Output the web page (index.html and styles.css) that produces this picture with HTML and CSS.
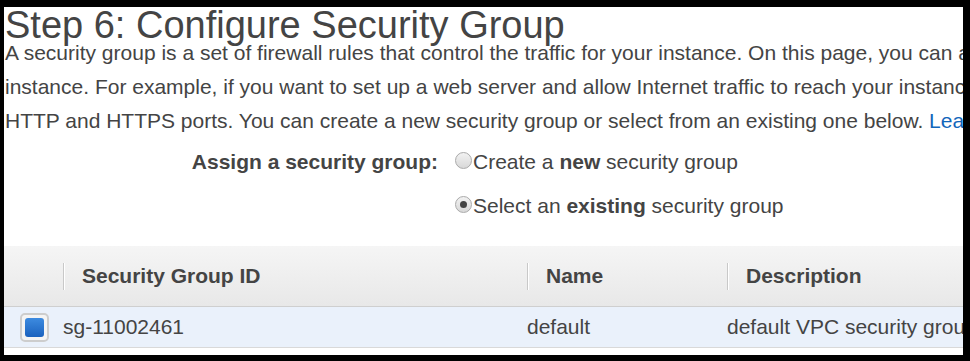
FILE: index.html
```html
<!DOCTYPE html>
<html>
<head>
	<meta charset="UTF-8">
	<title>Step 6: Configure Security Group</title>
	<link rel="stylesheet" href="styles.css">
</head>
<body>
	<div class="frame">
		<h1>Step 6: Configure Security Group</h1>
		<p class="intro">A security group is a set of firewall rules that control the traffic for your instance. On this page, you can add rules to allow specific traffic to reach your instance.<br>instance. For example, if you want to set up a web server and allow Internet traffic to reach your instance, add rules that allow unrestricted access to the<br>HTTP and HTTPS ports. You can create a new security group or select from an existing one below. <a href="#">Learn more</a> about Amazon EC2 security groups.</p>

		<div class="assign">
			<div class="assign-label">Assign a security group:</div>
			<div class="assign-options">
				<label class="opt"><input type="radio" name="sg" class="radio"><span>Create a <b>new</b> security group</span></label>
				<label class="opt"><input type="radio" name="sg" class="radio" checked><span>Select an <b>existing</b> security group</span></label>
			</div>
		</div>

		<div class="grid">
			<div class="th th-check"></div>
			<div class="th"><span>Security Group ID</span></div>
			<div class="th"><span>Name</span></div>
			<div class="th"><span>Description</span></div>

			<div class="td td-check"><span class="check"></span></div>
			<div class="td">sg-11002461</div>
			<div class="td">default</div>
			<div class="td">default VPC security group</div>
		</div>
	</div>
</body>
</html>
```

FILE: styles.css
```css
body {
	margin : 0;
	background-color : #000;
}
.frame {
	margin : 7px 0 0 4px;
	width : 959px;
	height : 348px;
	background-color : #fff;
	overflow : hidden;
	font-family : "Liberation Sans", Arial, sans-serif;
	color : #444;
}
h1 {
	margin : 1px 0 0 0;
	padding-left : 1px;
	font-size : 38px;
	font-weight : normal;
	line-height : 34px;
	white-space : nowrap;
}
.intro {
	margin : -6px 0 0 1px;
	font-size : 21px;
	line-height : 34px;
	white-space : nowrap;
}
.intro a {
	color : #1166bb;
	text-decoration : none;
}

/* assign a security group */
.assign {
	display : flex;
	margin-top : 9px;
	font-size : 21px;
}
.assign-label {
	width : 434px;
	text-align : right;
	font-weight : bold;
	line-height : 30px;
	padding-right : 17px;
}
.assign-options {
	display : flex;
	flex-direction : column;
	gap : 14px;
}
.opt {
	display : flex;
	align-items : center;
	height : 30px;
	white-space : nowrap;
}
.radio {
	appearance : none;
	-webkit-appearance : none;
	flex : none;
	width : 17px;
	height : 17px;
	margin : -3px 1px 0 0;
	border : 1px solid #aaa;
	border-radius : 50%;
	background : linear-gradient(#f2f2f2, #d8d8d8);
	position : relative;
}
.radio:checked::after {
	content : "";
	position : absolute;
	left : 4px;
	top : 4px;
	width : 7px;
	height : 7px;
	border-radius : 50%;
	background-color : #444;
}

/* table */
.grid {
	display : grid;
	grid-template-columns : 59px 464px 200px 1fr;
	margin-top : 25px;
}
.th {
	height : 60px;
	display : flex;
	align-items : center;
	background : linear-gradient(#f5f5f5, #e8e8e8);
	border-bottom : 1px solid #cfcfcf;
	font-size : 21px;
	font-weight : bold;
	white-space : nowrap;
}
.th span {
	display : flex;
	align-items : center;
	height : 27px;
	padding-left : 18px;
	border-left : 1px solid #c8c8c8;
	box-shadow : inset 1px 0 0 #fff;
}
.td {
	height : 40px;
	display : flex;
	align-items : center;
	background-color : #eaf1fb;
	border-bottom : 1px solid #d9d9d9;
	font-size : 21px;
	white-space : nowrap;
}
.td-check {
	padding-left : 16px;
}
.check {
	flex : none;
	width : 25px;
	height : 25px;
	border : 2px solid #cdcdcd;
	border-radius : 5px;
	background-color : #f4f4f4;
	display : flex;
	align-items : center;
	justify-content : center;
}
.check::after {
	content : "";
	width : 19px;
	height : 19px;
	border-radius : 3px;
	background : linear-gradient(#3d8be0, #1b62be);
}
```
